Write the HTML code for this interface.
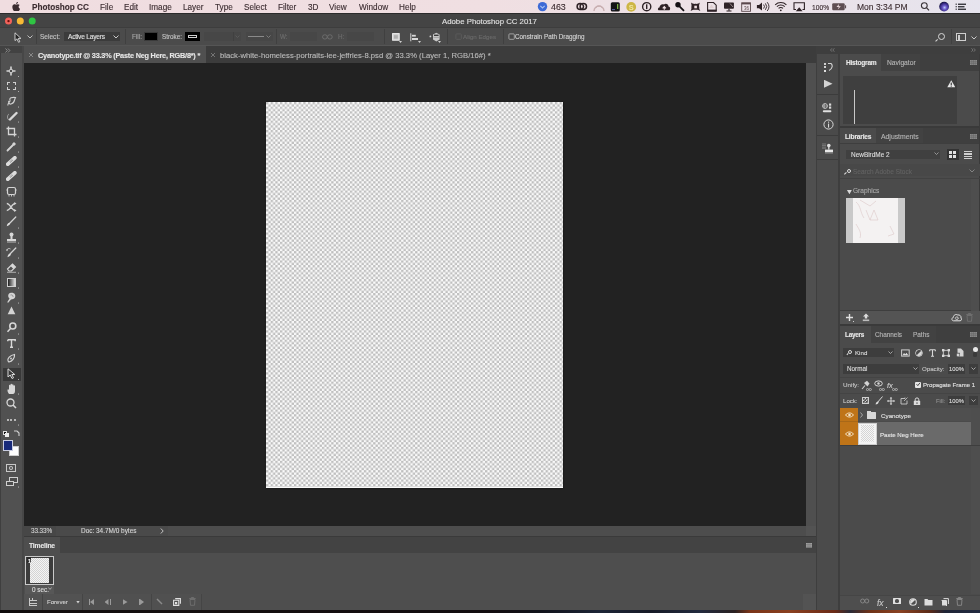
<!DOCTYPE html>
<html><head><meta charset="utf-8">
<style>
*{margin:0;padding:0;box-sizing:border-box}
html,body{width:980px;height:613px;overflow:hidden;background:#4b4b4b;font-family:"Liberation Sans",sans-serif;position:relative}
.a{position:absolute}
.t{position:absolute;white-space:nowrap;line-height:1;-webkit-text-stroke:0.12px currentColor;will-change:transform}
.doc{left:265.5px;top:102px;width:297.5px;height:385.5px;overflow:hidden;background:#fafafa;box-shadow:0 0 1.5px 0.5px #111}
</style></head><body>
<div class="a" style="left:0px;top:0px;width:980px;height:13px;background:linear-gradient(90deg,#f0dde0 0%,#f0dfe2 50%,#ebe2e8 80%,#e6e4ee 100%);"></div>
<svg class="a" style="left:12px;top:1.5px" width="8" height="9" viewBox="0 0 16 18"><path fill="#3b2c30" d="M13.3 9.6c0-2.3 1.9-3.4 2-3.5-1.1-1.6-2.8-1.8-3.4-1.8-1.4-.1-2.8.9-3.5.9-.7 0-1.8-.8-3-.8C3.8 4.4 2.3 5.3 1.5 6.7c-1.7 2.9-.4 7.2 1.2 9.6.8 1.2 1.8 2.5 3 2.4 1.2 0 1.7-.8 3.1-.8 1.5 0 1.9.8 3.1.8 1.3 0 2.1-1.2 2.9-2.3.9-1.300 1.300-2.600 1.300-2.700-.1 0-2.700-1-2.800-4.100zM11 2.700c.6-.8 1.100-1.900 1-3-.9 0-2.100.6-2.700 1.400-.6.700-1.100 1.800-1 2.900 1 .1 2.100-.5 2.700-1.300z"/></svg>
<div class="t" style="left:31.8px;top:4.00px;font-size:8.2px;color:#3b2c30;font-weight:bold;">Photoshop CC</div>
<div class="t" style="left:100px;top:4.00px;font-size:8.2px;color:#3b2c30;font-weight:normal;">File</div>
<div class="t" style="left:123.8px;top:4.00px;font-size:8.2px;color:#3b2c30;font-weight:normal;">Edit</div>
<div class="t" style="left:148.8px;top:4.00px;font-size:8.2px;color:#3b2c30;font-weight:normal;">Image</div>
<div class="t" style="left:182.7px;top:4.00px;font-size:8.2px;color:#3b2c30;font-weight:normal;">Layer</div>
<div class="t" style="left:214.9px;top:4.00px;font-size:8.2px;color:#3b2c30;font-weight:normal;">Type</div>
<div class="t" style="left:243.5px;top:4.00px;font-size:8.2px;color:#3b2c30;font-weight:normal;">Select</div>
<div class="t" style="left:277.8px;top:4.00px;font-size:8.2px;color:#3b2c30;font-weight:normal;">Filter</div>
<div class="t" style="left:307.9px;top:4.00px;font-size:8.2px;color:#3b2c30;font-weight:normal;">3D</div>
<div class="t" style="left:329.2px;top:4.00px;font-size:8.2px;color:#3b2c30;font-weight:normal;">View</div>
<div class="t" style="left:358.6px;top:4.00px;font-size:8.2px;color:#3b2c30;font-weight:normal;">Window</div>
<div class="t" style="left:399.4px;top:4.00px;font-size:8.2px;color:#3b2c30;font-weight:normal;">Help</div>
<svg class="a" style="left:0;top:0" width="980" height="13" viewBox="0 0 980 13">
<circle cx="542.5" cy="6.6" r="4.7" fill="#3d6ad6"/>
<path d="M540.3 5.8 L542.5 8 L544.7 5.8" fill="none" stroke="#a8c0f0" stroke-width="1.1"/>
<path d="M580.3 6.6 m-3.2 0 a3.2 3 0 1 0 6.4 0 a3.2 3 0 1 0 -6.4 0 M583.3 6.6 m-3.2 0 a3.2 3 0 1 0 6.4 0 a3.2 3 0 1 0 -6.4 0" fill="none" stroke="#2e2226" stroke-width="1.5"/>
<path d="M594 11 A5 5 0 0 1 604 11" fill="none" stroke="#c8aeb0" stroke-width="1.3"/>
<path d="M596 8 L598 5.5 L599 7 L600 5.5 L602 8" fill="none" stroke="#c8aeb0" stroke-width="0.8"/>
<rect x="610.8" y="2.2" width="9" height="9.2" rx="1.5" fill="#141414"/>
<rect x="617" y="4" width="1.3" height="5" fill="#7ab040"/>
<rect x="612" y="9.3" width="3" height="0.8" fill="#6a7ad0"/>
<circle cx="631.2" cy="6.9" r="4.9" fill="#cdb645"/>
<text x="631.2" y="9.6" font-size="7.5" font-family="Liberation Sans" font-weight="bold" fill="#f0e6a0" text-anchor="middle">S</text>
<circle cx="646.7" cy="6.7" r="4.1" fill="none" stroke="#2e2226" stroke-width="1.4"/>
<rect x="646" y="4.3" width="1.4" height="4.8" fill="#2e2226"/>
<path d="M659 10.3 C657.5 10.3 657.5 7.5 659.5 7.5 C659.5 5 662 3.5 664 4.5 C665.5 3 668.5 4 668.5 6.5 C670.5 6.5 670.8 10.3 668.8 10.3 Z" fill="#2e2226"/>
<path d="M664.3 9.8 L664.3 7.2 M662.7 8.3 L664.3 6.6 L665.9 8.3" fill="none" stroke="#efdfe2" stroke-width="1.1"/>
<circle cx="678" cy="4.8" r="2.7" fill="#141014"/>
<path d="M679.5 6.3 L684 10.8" stroke="#141014" stroke-width="1.7"/>
<path d="M691 2.5 C693 4 694 4 695.5 3.8 C697 4 698 4 700 2.5 C699 4.5 698.8 6 699.3 7 C699 8.5 699.5 9.5 700.4 11 C698.5 9.8 697 9.5 695.5 9.8 C694 9.5 692.5 9.8 690.6 11 C691.5 9 691.6 8 691.3 7 C691.8 6 691.5 4.5 691 2.5 Z" fill="#2e2226"/>
<rect x="694.3" y="5.7" width="2.6" height="2.6" fill="#efdfe2"/>
<path d="M707.6 11 L707.6 2.5 L713.5 2.5 L716.2 5.2 L716.2 11 Z" fill="none" stroke="#2e2226" stroke-width="1.1"/>
<rect x="707.2" y="9.6" width="9.4" height="2" fill="#2e2226"/>
<path d="M709 8 L711.5 4.5 L714 8 Z" fill="#e0d0d2"/>
<rect x="724" y="2.5" width="9.9" height="6.2" rx="0.8" fill="#2e2226"/>
<path d="M730 3.5 L733 7" stroke="#c8b8ba" stroke-width="0.7"/>
<rect x="728.4" y="8.7" width="1.2" height="2" fill="#2e2226"/><rect x="726.5" y="10.5" width="5" height="1" fill="#2e2226"/>
<rect x="741.7" y="2.8" width="8.8" height="8.5" fill="none" stroke="#5a484c" stroke-width="0.9"/>
<rect x="741.7" y="2.8" width="8.8" height="1.6" fill="#5a484c"/>
<text x="746.5" y="9.8" font-size="4.5" font-family="Liberation Sans" fill="#5a484c" text-anchor="middle">36</text>
<path d="M756.9 5 L759 5 L762 2.6 L762 10.6 L759 8.2 L756.9 8.2 Z" fill="#2e2226"/>
<path d="M763.6 4.6 A3 3 0 0 1 763.6 8.6 M765.4 3.4 A5 5 0 0 1 765.4 9.8 M767.2 2.2 A7 7 0 0 1 767.2 11" fill="none" stroke="#2e2226" stroke-width="0.9"/>
<path d="M775.2 4.8 A8 8 0 0 1 786.4 4.8 M776.9 6.6 A5.5 5.5 0 0 1 784.7 6.6 M778.6 8.4 A3 3 0 0 1 783 8.4" fill="none" stroke="#2e2226" stroke-width="1.1"/>
<circle cx="780.8" cy="10.3" r="0.9" fill="#2e2226"/>
<path d="M796 9.5 L794 9.5 L794 2.8 L804.4 2.8 L804.4 9.5 L802.5 9.5" fill="none" stroke="#2e2226" stroke-width="1.1"/>
<path d="M799.2 7.2 L802.6 11.3 L795.8 11.3 Z" fill="#2e2226"/>
<rect x="832.2" y="3.3" width="12.5" height="7" rx="1.2" fill="#5e4e52"/>
<rect x="845" y="5.3" width="1.1" height="3" fill="#5e4e52"/>
<path d="M839 4 L836.5 7 L838.8 7 L837.8 9.6 L840.8 6.3 L838.6 6.3 Z" fill="#efdfe2"/>
<circle cx="924.3" cy="5.6" r="2.9" fill="none" stroke="#3a3438" stroke-width="1.1"/>
<path d="M926.4 7.7 L929 10.3" stroke="#3a3438" stroke-width="1.2"/>
<defs><radialGradient id="siri" cx="55%" cy="60%" r="60%"><stop offset="0" stop-color="#b8c8f8"/><stop offset="0.35" stop-color="#6a58c8"/><stop offset="0.8" stop-color="#2a2070"/><stop offset="1" stop-color="#141438"/></radialGradient></defs>
<circle cx="944.1" cy="6.6" r="4.9" fill="url(#siri)"/>
<rect x="955.6" y="3.6" width="1.2" height="1.2" fill="#2a2a30"/><rect x="958" y="3.6" width="8" height="1.3" fill="#2a2a30"/>
<rect x="955.6" y="6.1" width="1.2" height="1.2" fill="#2a2a30"/><rect x="958" y="6.1" width="6.5" height="1.3" fill="#2a2a30"/>
<rect x="955.6" y="8.6" width="1.2" height="1.2" fill="#2a2a30"/><rect x="958" y="8.6" width="8" height="1.3" fill="#2a2a30"/>
</svg>
<div class="t" style="left:550.9px;top:3.00px;font-size:8.9px;color:#3b2c30;font-weight:normal;">463</div>
<div class="t" style="left:811.9px;top:5.00px;font-size:6.7px;color:#3b2c30;font-weight:normal;">100%</div>
<div class="t" style="left:857.2px;top:3.00px;font-size:8.5px;color:#3b2c30;font-weight:normal;">Mon 3:34 PM</div>
<div class="a" style="left:0px;top:13px;width:980px;height:1px;background:#2b2b2b;"></div>
<div class="a" style="left:0px;top:14px;width:980px;height:13px;background:#444444;"></div>
<svg class="a" style="left:0;top:13px" width="40" height="14"><circle cx="8.5" cy="8.1" r="3.5" fill="#f2625a"/><circle cx="8.5" cy="8.1" r="1.2" fill="#6a0e0a"/><circle cx="20.3" cy="8.1" r="3.5" fill="#f7b935"/><circle cx="32.2" cy="8.1" r="3.5" fill="#2fc443"/></svg>
<div class="t" style="left:442.2px;top:18.00px;font-size:7.8px;color:#e0e0e0;font-weight:normal;">Adobe Photoshop CC 2017</div>
<div class="a" style="left:0px;top:27px;width:980px;height:19px;background:#4b4b4b;"></div>
<div class="a" style="left:0px;top:27px;width:980px;height:1px;background:#3d3d3d;"></div>
<div class="a" style="left:0px;top:45px;width:980px;height:1px;background:#555555;"></div>
<svg class="a" style="left:14px;top:31.5px" width="8" height="11" viewBox="0 0 8 11"><path d="M1 0.8 L1 8.6 L2.9 6.9 L4.6 10.3 L5.8 9.7 L4.2 6.4 L6.9 6.4 Z" fill="#222" stroke="#dcdcdc" stroke-width="0.9"/></svg>
<svg class="a" style="left:26.5px;top:34.5px" width="6" height="4" viewBox="0 0 6 4"><path d="M0.5 0.5 L3 3 L5.5 0.5" fill="none" stroke="#bdbdbd" stroke-width="1"/></svg>
<div class="a" style="left:36px;top:29px;width:1px;height:15px;background:#404040;"></div>
<div class="t" style="left:40.3px;top:34.00px;font-size:6.55px;color:#c4c4c4;font-weight:normal;">Select:</div>
<div class="a" style="left:63.7px;top:31.5px;width:56.5px;height:9.3px;background:#3b3b3b;"></div>
<div class="t" style="left:67.8px;top:34.00px;font-size:6.6px;color:#e0e0e0;font-weight:normal;letter-spacing:-0.22px">Active Layers</div>
<svg class="a" style="left:113px;top:34.5px" width="6" height="4" viewBox="0 0 6 4"><path d="M0.5 0.5 L3 3 L5.5 0.5" fill="none" stroke="#c8c8c8" stroke-width="1"/></svg>
<div class="a" style="left:125px;top:29px;width:1px;height:15px;background:#404040;"></div>
<div class="t" style="left:132px;top:34.00px;font-size:6.4px;color:#a8a8a8;font-weight:normal;">Fill:</div>
<div class="a" style="left:143.7px;top:31.9px;width:14.7px;height:8.9px;background:#000;border:0.8px solid #3a3a3a"></div>
<div class="t" style="left:161.8px;top:34.00px;font-size:6.3px;color:#c4c4c4;font-weight:normal;">Stroke:</div>
<div class="a" style="left:184.5px;top:31.9px;width:15px;height:8.9px;background:#000;"></div>
<div class="a" style="left:187.5px;top:34.6px;width:9px;height:3.5px;background:transparent;border:1px solid #cfcfcf"></div>
<div class="a" style="left:204px;top:31.9px;width:37px;height:8.9px;background:#474747;"></div>
<div class="a" style="left:233px;top:31.9px;width:1px;height:8.9px;background:#404040;"></div>
<svg class="a" style="left:235px;top:35px" width="5" height="3" viewBox="0 0 5 3"><path d="M0.5 0.5 L2.5 2.5 L4.5 0.5" fill="none" stroke="#5e5e5e" stroke-width="0.8"/></svg>
<div class="a" style="left:245.7px;top:31.9px;width:27px;height:8.9px;background:#474747;"></div>
<div class="a" style="left:248px;top:36px;width:16px;height:0.8px;background:#8a8a8a;"></div>
<svg class="a" style="left:266px;top:35px" width="5" height="3" viewBox="0 0 5 3"><path d="M0.5 0.5 L2.5 2.5 L4.5 0.5" fill="none" stroke="#8a8a8a" stroke-width="0.8"/></svg>
<div class="a" style="left:276px;top:29px;width:1px;height:15px;background:#404040;"></div>
<div class="t" style="left:280px;top:34.00px;font-size:6.3px;color:#6d6d6d;font-weight:normal;">W:</div>
<div class="a" style="left:289.6px;top:31.9px;width:27.5px;height:8.9px;background:#474747;"></div>
<svg class="a" style="left:321.5px;top:33.5px" width="11" height="6" viewBox="0 0 11 6"><rect x="0.6" y="0.8" width="4.6" height="4.2" rx="2" fill="none" stroke="#707070" stroke-width="0.9"/><rect x="5.6" y="0.8" width="4.6" height="4.2" rx="2" fill="none" stroke="#707070" stroke-width="0.9"/></svg>
<div class="t" style="left:338px;top:34.00px;font-size:6.3px;color:#6d6d6d;font-weight:normal;">H:</div>
<div class="a" style="left:346.8px;top:31.9px;width:27.4px;height:8.9px;background:#474747;"></div>
<div class="a" style="left:384px;top:29px;width:1px;height:15px;background:#404040;"></div>
<svg class="a" style="left:391.5px;top:32.5px" width="8" height="8" viewBox="0 0 8 8"><rect x="0.6" y="0.6" width="6.6" height="6.6" fill="#d0d0d0" stroke="#f0f0f0" stroke-width="1"/><rect x="2" y="2.2" width="3.8" height="3.4" fill="#b0b0b0"/></svg>
<svg class="a" style="left:399px;top:41px" width="3" height="2" viewBox="0 0 3 2"><path d="M0 0 L3 0 L1.5 2 Z" fill="#cfcfcf"/></svg>
<svg class="a" style="left:410px;top:32.5px" width="9" height="9" viewBox="0 0 9 9"><rect x="0.3" y="0.3" width="1" height="8" fill="#d8d8d8"/><rect x="2" y="1.8" width="3.8" height="1.8" fill="#d8d8d8"/><rect x="2" y="5" width="6" height="2" fill="#d8d8d8"/></svg>
<svg class="a" style="left:418px;top:41px" width="3" height="2" viewBox="0 0 3 2"><path d="M0 0 L3 0 L1.5 2 Z" fill="#cfcfcf"/></svg>
<svg class="a" style="left:428.5px;top:31.5px" width="12" height="10" viewBox="0 0 12 10"><circle cx="1.4" cy="4.4" r="0.9" fill="#d0d0d0"/><path d="M7.3 0.8 L10.6 2.4 L10.6 7.6 L7.3 9.4 L4 7.6 L4 2.4 Z" fill="#c8c8c8"/><path d="M5 2.6 L9.6 2.6 L9.6 4 L5 4 Z" fill="#3a3a3a"/><path d="M4.5 5.4 L10 5.4" stroke="#8a8a8a" stroke-width="0.6"/></svg>
<svg class="a" style="left:437.5px;top:41px" width="3" height="2" viewBox="0 0 3 2"><path d="M0 0 L3 0 L1.5 2 Z" fill="#cfcfcf"/></svg>
<div class="a" style="left:447px;top:29px;width:1px;height:15px;background:#404040;"></div>
<svg class="a" style="left:454.5px;top:33px" width="7" height="7" viewBox="0 0 7 7"><rect x="0.9" y="0.9" width="5.4" height="5.4" rx="0.8" fill="none" stroke="#5e5e5e" stroke-width="0.8"/></svg>
<div class="t" style="left:463px;top:34.00px;font-size:6.2px;color:#6a6a6a;font-weight:normal;">Align Edges</div>
<div class="a" style="left:503px;top:29px;width:1px;height:15px;background:#404040;"></div>
<svg class="a" style="left:508px;top:33px" width="7" height="7" viewBox="0 0 7 7"><rect x="0.9" y="0.9" width="5.4" height="5.4" rx="0.8" fill="#474747" stroke="#b8b8b8" stroke-width="0.8"/></svg>
<div class="t" style="left:515.3px;top:34.00px;font-size:6.35px;color:#d4d4d4;font-weight:normal;">Constrain Path Dragging</div>
<div class="a" style="left:937.8px;top:32.8px;width:7px;height:7px;border:1.3px solid #d8d8d8;border-radius:50%"></div>
<div class="a" style="left:936px;top:39.3px;width:1.4px;height:3.2px;background:#d8d8d8;transform:rotate(45deg)"></div>
<div class="a" style="left:951px;top:29px;width:1px;height:15px;background:#404040;"></div>
<div class="a" style="left:956px;top:33.3px;width:10px;height:7.8px;background:transparent;border:1.2px solid #cfcfcf"></div>
<div class="a" style="left:958.3px;top:34.5px;width:1.3px;height:5.4px;background:#cfcfcf;"></div>
<svg class="a" style="left:970.5px;top:35.5px" width="6" height="4" viewBox="0 0 6 4"><path d="M0.5 0.5 L3 3 L5.5 0.5" fill="none" stroke="#c8c8c8" stroke-width="1"/></svg>
<div class="a" style="left:0px;top:46px;width:24px;height:564px;background:#515151;"></div>
<div class="a" style="left:0px;top:46px;width:1px;height:564px;background:#3f3f3f;"></div>
<div class="a" style="left:22px;top:46px;width:2px;height:564px;background:#474747;"></div>
<div class="a" style="left:0px;top:46px;width:22px;height:7px;background:#424242;"></div>
<svg class="a" style="left:5px;top:47.5px" width="6" height="5" viewBox="0 0 6 5"><path d="M0.5 0.5 L2.3 2.5 L0.5 4.5 M3 0.5 L4.8 2.5 L3 4.5" fill="none" stroke="#a0a0a0" stroke-width="0.8"/></svg>
<div class="a" style="left:3px;top:367.5px;width:17.5px;height:13px;background:#383838;"></div>
<svg class="a" style="left:6px;top:66px" width="10" height="10" viewBox="0 0 10 10"><path d="M5 0.5 L5 9.5 M0.5 5 L9.5 5" stroke="#d4d4d4" stroke-width="1.6"/><circle cx="5" cy="5" r="1.8" fill="#4c4c4c" stroke="#d4d4d4" stroke-width="1"/></svg>
<div class="a" style="left:17.5px;top:75.5px;width:1.6px;height:1.6px;background:#bdbdbd;clip-path:polygon(100% 0,100% 100%,0 100%)"></div>
<div class="a" style="left:6.5px;top:81.5px;width:9px;height:8.5px;background:transparent;border:1px dashed #d0d0d0"></div>
<div class="a" style="left:17.5px;top:90.5px;width:1.6px;height:1.6px;background:#bdbdbd;clip-path:polygon(100% 0,100% 100%,0 100%)"></div>
<svg class="a" style="left:6px;top:96px" width="11" height="11" viewBox="0 0 11 11"><path d="M2 9.5 C1 7 5 6 4 4 C3 2 6 1 9.5 1.5 C8 4 9 7 5 8 C3 8.5 2 6 3 5" fill="none" stroke="#d0d0d0" stroke-width="1.1"/></svg>
<div class="a" style="left:17.5px;top:106px;width:1.6px;height:1.6px;background:#bdbdbd;clip-path:polygon(100% 0,100% 100%,0 100%)"></div>
<svg class="a" style="left:5.5px;top:111px" width="12" height="11" viewBox="0 0 12 11"><path d="M3 9 C1 8 1 4 3 3" fill="none" stroke="#a0a0a0" stroke-width="1"/><path d="M4 8.5 L10.5 2" stroke="#d8d8d8" stroke-width="2.4" stroke-linecap="round"/></svg>
<div class="a" style="left:17.5px;top:121px;width:1.6px;height:1.6px;background:#bdbdbd;clip-path:polygon(100% 0,100% 100%,0 100%)"></div>
<svg class="a" style="left:6px;top:126px" width="11" height="11" viewBox="0 0 11 11"><path d="M2.5 0.5 L2.5 8.5 L10.5 8.5 M0.5 2.5 L8.5 2.5 L8.5 10.5" fill="none" stroke="#d4d4d4" stroke-width="1.3"/></svg>
<div class="a" style="left:17.5px;top:136px;width:1.6px;height:1.6px;background:#bdbdbd;clip-path:polygon(100% 0,100% 100%,0 100%)"></div>
<svg class="a" style="left:6px;top:141px" width="11" height="11" viewBox="0 0 11 11"><path d="M1.5 9.5 L7 4" stroke="#d4d4d4" stroke-width="1.8" stroke-linecap="round"/><path d="M6 3 L8 1 L10 3 L8 5 Z" fill="#d4d4d4"/></svg>
<div class="a" style="left:17.5px;top:151px;width:1.6px;height:1.6px;background:#bdbdbd;clip-path:polygon(100% 0,100% 100%,0 100%)"></div>
<svg class="a" style="left:6px;top:156px" width="11" height="10" viewBox="0 0 11 10"><path d="M1.8 8.2 L8.8 1.8" stroke="#dcdcdc" stroke-width="3.8" stroke-linecap="round"/><path d="M4 6.3 L6.6 3.7" stroke="#8a8a8a" stroke-width="1.6" stroke-dasharray="0.8 0.5"/></svg>
<div class="a" style="left:17.5px;top:166px;width:1.6px;height:1.6px;background:#bdbdbd;clip-path:polygon(100% 0,100% 100%,0 100%)"></div>
<svg class="a" style="left:6px;top:171px" width="11" height="10" viewBox="0 0 11 10"><path d="M1.8 8.2 L8.8 1.8" stroke="#dcdcdc" stroke-width="3.8" stroke-linecap="round"/><path d="M4 6.3 L6.6 3.7" stroke="#8a8a8a" stroke-width="1.6" stroke-dasharray="0.8 0.5"/></svg>
<svg class="a" style="left:5.5px;top:186px" width="11" height="11" viewBox="0 0 11 11"><rect x="1.5" y="1.5" width="8" height="7" rx="1.5" fill="none" stroke="#d4d4d4" stroke-width="1.2"/><path d="M3 9 L3 10.5 M5.5 9 L5.5 10.5 M8 9 L8 10.5 M1.5 4 L0.3 4 M9.5 4 L10.7 4" stroke="#d4d4d4" stroke-width="0.9"/></svg>
<svg class="a" style="left:6px;top:202px" width="11" height="10" viewBox="0 0 11 10"><path d="M0.8 1.5 C4 1.5 6 8.5 9 8.5 M0.8 8.5 C4 8.5 6 1.5 9 1.5" fill="none" stroke="#d4d4d4" stroke-width="1.3"/><path d="M8.3 0 L10.5 1.5 L8.3 3 Z M8.3 7 L10.5 8.5 L8.3 10 Z" fill="#d4d4d4"/></svg>
<svg class="a" style="left:6px;top:216px" width="11" height="11" viewBox="0 0 11 11"><path d="M2.5 8.5 L9.8 1" stroke="#d4d4d4" stroke-width="1.2" stroke-linecap="round"/><path d="M0.8 10.2 C1 8 2 6.8 3.8 6.8 C4.3 7.5 4 9 0.8 10.2 Z" fill="#e0e0e0"/></svg>
<div class="a" style="left:17.5px;top:227px;width:1.6px;height:1.6px;background:#bdbdbd;clip-path:polygon(100% 0,100% 100%,0 100%)"></div>
<svg class="a" style="left:6px;top:232px" width="11" height="11" viewBox="0 0 11 11"><circle cx="5.5" cy="2.5" r="2" fill="#d8d8d8"/><rect x="4.5" y="4" width="2" height="3" fill="#d8d8d8"/><rect x="1" y="7" width="9" height="2" fill="#d8d8d8"/><rect x="1" y="9.5" width="9" height="1" fill="#bbb"/></svg>
<div class="a" style="left:17.5px;top:242px;width:1.6px;height:1.6px;background:#bdbdbd;clip-path:polygon(100% 0,100% 100%,0 100%)"></div>
<svg class="a" style="left:6px;top:247px" width="11" height="11" viewBox="0 0 11 11"><path d="M3.5 7.5 L9.8 1" stroke="#d4d4d4" stroke-width="1.2" stroke-linecap="round"/><path d="M1.5 10.2 C1.7 8 2.7 6.8 4.5 6.8 C5 7.5 4.7 9 1.5 10.2 Z" fill="#e0e0e0"/><path d="M0.8 3.5 C1.2 1.5 3 1 4.5 2" fill="none" stroke="#d4d4d4" stroke-width="0.9"/><path d="M0 2.5 L1 4.2 L2 2.8 Z" fill="#d4d4d4"/></svg>
<div class="a" style="left:17.5px;top:257px;width:1.6px;height:1.6px;background:#bdbdbd;clip-path:polygon(100% 0,100% 100%,0 100%)"></div>
<svg class="a" style="left:6px;top:261.5px" width="11" height="11" viewBox="0 0 11 11"><path d="M1.5 7 L6.5 2 L9.5 5 L5.5 9 L3 9 Z" fill="none" stroke="#d8d8d8" stroke-width="1.1"/><path d="M4.5 4 L7.5 7 L9.5 5 L6.5 2 Z" fill="#d8d8d8"/><rect x="1" y="9.8" width="9" height="0.9" fill="#bbb"/></svg>
<div class="a" style="left:17.5px;top:272px;width:1.6px;height:1.6px;background:#bdbdbd;clip-path:polygon(100% 0,100% 100%,0 100%)"></div>
<div class="a" style="left:6.5px;top:278px;width:9px;height:8.5px;background:linear-gradient(90deg,#1f1f1f,#e0e0e0);border:1px solid #d0d0d0"></div>
<div class="a" style="left:17.5px;top:287px;width:1.6px;height:1.6px;background:#bdbdbd;clip-path:polygon(100% 0,100% 100%,0 100%)"></div>
<svg class="a" style="left:6px;top:292px" width="11" height="12" viewBox="0 0 11 12"><path d="M5 0.8 C8.5 0.5 10 3 9 5.5 C8 7.5 6.5 7 5 7.5 L2.2 10.8 L1.2 10.2 L3.5 6.5 C1.5 5 1.8 1 5 0.8 Z" fill="#d4d4d4"/><path d="M4.5 3 C6 2.5 7.5 3.5 7 5" fill="none" stroke="#777" stroke-width="0.7"/></svg>
<div class="a" style="left:17.5px;top:302px;width:1.6px;height:1.6px;background:#bdbdbd;clip-path:polygon(100% 0,100% 100%,0 100%)"></div>
<svg class="a" style="left:6.5px;top:305.5px" width="9" height="9" viewBox="0 0 9 9"><path d="M4.5 0.5 L8.3 8.3 L0.7 8.3 Z" fill="#d4d4d4"/></svg>
<svg class="a" style="left:6px;top:322px" width="11" height="11" viewBox="0 0 11 11"><circle cx="6.8" cy="4" r="3" fill="none" stroke="#d8d8d8" stroke-width="1.6"/><path d="M5 6 L1.5 9.8" stroke="#d8d8d8" stroke-width="1.5"/></svg>
<div class="a" style="left:17.5px;top:333px;width:1.6px;height:1.6px;background:#bdbdbd;clip-path:polygon(100% 0,100% 100%,0 100%)"></div>
<svg class="a" style="left:6.5px;top:338.5px" width="9" height="9" viewBox="0 0 9 9"><path d="M0.8 0.8 L8.2 0.8 L8.2 2.3 M0.8 0.8 L0.8 2.3 M4.5 0.8 L4.5 8.2 M3 8.2 L6 8.2" fill="none" stroke="#d8d8d8" stroke-width="1.4"/></svg>
<div class="a" style="left:17.5px;top:348px;width:1.6px;height:1.6px;background:#bdbdbd;clip-path:polygon(100% 0,100% 100%,0 100%)"></div>
<svg class="a" style="left:6px;top:353px" width="11" height="11" viewBox="0 0 11 11"><path d="M2 8 C1 6 4 2 8.5 1.5 C9 5 6 8.5 3 9 Z" fill="none" stroke="#d4d4d4" stroke-width="1.2"/><circle cx="5" cy="5.5" r="0.9" fill="#d4d4d4"/></svg>
<div class="a" style="left:17.5px;top:363px;width:1.6px;height:1.6px;background:#bdbdbd;clip-path:polygon(100% 0,100% 100%,0 100%)"></div>
<svg class="a" style="left:7px;top:368px" width="9" height="11" viewBox="0 0 9 11"><path d="M1 0.8 L1 9 L3.2 7 L5 10.5 L6.5 9.8 L4.8 6.5 L7.8 6.5 Z" fill="#383838" stroke="#d8d8d8" stroke-width="1"/></svg>
<div class="a" style="left:17.5px;top:378.5px;width:1.6px;height:1.6px;background:#bdbdbd;clip-path:polygon(100% 0,100% 100%,0 100%)"></div>
<svg class="a" style="left:5.5px;top:383px" width="12" height="12" viewBox="0 0 12 12"><path d="M3 11 C1.5 9 1 7 2 6 L3 7 L3 2.5 C3 1.5 4.3 1.5 4.3 2.5 L4.5 1.5 C4.5 0.5 6 0.5 6 1.5 L6 2 C6 1 7.5 1 7.5 2 L7.5 3 C7.5 2 9 2 9 3 L9 8 C9 10 8 11 7 11 Z" fill="#d8d8d8"/></svg>
<div class="a" style="left:17.5px;top:393px;width:1.6px;height:1.6px;background:#bdbdbd;clip-path:polygon(100% 0,100% 100%,0 100%)"></div>
<svg class="a" style="left:6px;top:398px" width="11" height="11" viewBox="0 0 11 11"><circle cx="4.5" cy="4.5" r="3.5" fill="none" stroke="#d8d8d8" stroke-width="1.3"/><path d="M7 7 L10 10" stroke="#d8d8d8" stroke-width="1.6"/></svg>
<div class="a" style="left:6.5px;top:419px;width:2px;height:2px;background:#d8d8d8;border-radius:50%"></div>
<div class="a" style="left:10.3px;top:419px;width:2px;height:2px;background:#d8d8d8;border-radius:50%"></div>
<div class="a" style="left:14.1px;top:419px;width:2px;height:2px;background:#d8d8d8;border-radius:50%"></div>
<div class="a" style="left:17.5px;top:424px;width:1.6px;height:1.6px;background:#bdbdbd;clip-path:polygon(100% 0,100% 100%,0 100%)"></div>
<div class="a" style="left:3px;top:430.5px;width:4px;height:4px;background:#111;border:0.6px solid #ddd"></div>
<div class="a" style="left:5px;top:432.5px;width:4px;height:4px;background:#eee;"></div>
<svg class="a" style="left:12.5px;top:429.5px" width="7" height="7" viewBox="0 0 7 7"><path d="M1 1 L4 1 M4 1 L6 3 L6 6" fill="none" stroke="#cfcfcf" stroke-width="1.1"/></svg>
<div class="a" style="left:9px;top:446px;width:10px;height:10px;background:#fdfdfd;border:0.5px solid #ccc"></div>
<div class="a" style="left:3.3px;top:440px;width:10.2px;height:10.6px;background:#182a7a;border:1px solid #c8cce0"></div>
<div class="a" style="left:6px;top:463.5px;width:10px;height:8px;background:transparent;border:1.2px solid #c8c8c8"></div>
<div class="a" style="left:8.8px;top:465.6px;width:4.4px;height:4px;border:1px solid #c8c8c8;border-radius:50%"></div>
<div class="a" style="left:9px;top:477px;width:9px;height:6px;background:#4c4c4c;border:1.1px solid #cfcfcf"></div>
<div class="a" style="left:6px;top:480.5px;width:8px;height:5px;background:#4c4c4c;border:1.1px solid #cfcfcf"></div>
<div class="a" style="left:17.5px;top:486px;width:1.6px;height:1.6px;background:#bdbdbd;clip-path:polygon(100% 0,100% 100%,0 100%)"></div>
<div class="a" style="left:24px;top:46px;width:792px;height:17px;background:#3c3c3c;"></div>
<div class="a" style="left:24px;top:46px;width:182px;height:17px;background:#505050;"></div>
<svg class="a" style="left:27.5px;top:51.5px" width="6" height="6" viewBox="0 0 6 6"><path d="M1 1 L5 5 M5 1 L1 5" stroke="#8e8e8e" stroke-width="0.9"/></svg>
<div class="t" style="left:37.8px;top:52.00px;font-size:7.3px;color:#e6e6e6;font-weight:bold;letter-spacing:-0.22px">Cyanotype.tif @ 33.3% (Paste Neg Here, RGB/8*) *</div>
<svg class="a" style="left:209.5px;top:51.5px" width="6" height="6" viewBox="0 0 6 6"><path d="M1 1 L5 5 M5 1 L1 5" stroke="#7a7a7a" stroke-width="0.9"/></svg>
<div class="t" style="left:220px;top:52.00px;font-size:7.68px;color:#bababa;font-weight:normal;">black-white-homeless-portraits-lee-jeffries-8.psd @ 33.3% (Layer 1, RGB/16#) *</div>
<div class="a" style="left:24px;top:63px;width:782px;height:463px;background:#222222;"></div>
<div class="a doc"><svg width="298" height="385" style="display:block"><defs><pattern id="chk" width="4.66" height="4.66" patternUnits="userSpaceOnUse"><rect width="2.33" height="2.33" fill="#bfbfbf"/><rect x="2.33" y="2.33" width="2.33" height="2.33" fill="#bfbfbf"/></pattern></defs><rect width="298" height="385" fill="url(#chk)"/></svg></div>
<div class="a" style="left:806px;top:63px;width:10px;height:463px;background:#4f4f4f;"></div>
<div class="a" style="left:24px;top:526px;width:792px;height:9.5px;background:#4d4d4d;"></div>
<div class="a" style="left:24px;top:526px;width:32px;height:9.5px;background:#474747;"></div>
<div class="a" style="left:56px;top:526px;width:112px;height:9.5px;background:#4a4a4a;"></div>
<div class="t" style="left:31.1px;top:528.00px;font-size:6.4px;color:#d0d0d0;font-weight:normal;letter-spacing:-0.1px">33.33%</div>
<div class="t" style="left:80.7px;top:528.00px;font-size:6.45px;color:#d4d4d4;font-weight:normal;">Doc: 34.7M/0 bytes</div>
<svg class="a" style="left:159.5px;top:528px" width="4" height="6" viewBox="0 0 4 6"><path d="M0.8 0.5 L3.2 3 L0.8 5.5" fill="none" stroke="#cfcfcf" stroke-width="0.9"/></svg>
<div class="a" style="left:24px;top:535.5px;width:792px;height:1px;background:#3a3a3a;"></div>
<div class="a" style="left:24px;top:536.5px;width:792px;height:16.5px;background:#434343;"></div>
<div class="a" style="left:24px;top:552.5px;width:792px;height:0.8px;background:#3a3a3a;"></div>
<div class="a" style="left:24px;top:536.5px;width:36px;height:16.5px;background:#4e4e4e;"></div>
<div class="t" style="left:29px;top:543.00px;font-size:6.8px;color:#e6e6e6;font-weight:bold;letter-spacing:-0.19px">Timeline</div>
<svg class="a" style="left:805.5px;top:542.8px" width="6" height="5"><rect width="6" height="4.6" fill="#a0a0a0"/><path d="M0 1.5 L6 1.5 M0 3.1 L6 3.1 M2 0 L2 5 M4 0 L4 5" stroke="#6a6a6a" stroke-width="0.4"/></svg>
<div class="a" style="left:24px;top:553px;width:792px;height:41px;background:#4e4e4e;"></div>
<div class="a" style="left:25.1px;top:556px;width:29px;height:29px;background:#3c3c3c;border:1px solid #c9c9c9"></div>
<svg class="a" style="left:29.8px;top:557.7px" width="19.5" height="25.7"><rect width="19.5" height="25.7" fill="#f4f4f4"/><rect width="19.5" height="25.7" fill="url(#chk2)"/></svg>
<div class="a" style="left:27px;top:557px;width:4px;height:6px;background:#2a2a2a;"></div>
<div class="t" style="left:27.6px;top:559.00px;font-size:5.5px;color:#f0f0f0;font-weight:bold;">1</div>
<div class="a" style="left:25px;top:585px;width:29px;height:9px;background:#575757;"></div>
<div class="t" style="left:31.8px;top:587.00px;font-size:6.4px;color:#dcdcdc;font-weight:normal;">0 sec.</div>
<svg class="a" style="left:48px;top:587px" width="4" height="3" viewBox="0 0 4 3"><path d="M0.4 0.5 L2 2.4 L3.6 0.5" fill="none" stroke="#cfcfcf" stroke-width="0.7"/></svg>
<div class="a" style="left:24px;top:594px;width:792px;height:16px;background:#4e4e4e;"></div>
<div class="a" style="left:24px;top:594px;width:18px;height:16px;background:#535353;"></div>
<div class="a" style="left:42px;top:594px;width:40px;height:16px;background:#525252;"></div>
<div class="a" style="left:82px;top:594px;width:69px;height:16px;background:#505050;"></div>
<div class="a" style="left:151px;top:594px;width:50px;height:16px;background:#505050;"></div>
<div class="a" style="left:41.6px;top:594px;width:1px;height:15.6px;background:#454545;"></div>
<div class="a" style="left:81.7px;top:594px;width:1px;height:15.6px;background:#454545;"></div>
<div class="a" style="left:151px;top:594px;width:1px;height:15.6px;background:#454545;"></div>
<div class="a" style="left:200.5px;top:594px;width:1px;height:15.6px;background:#454545;"></div>
<div class="a" style="left:28.5px;top:598px;width:1px;height:8px;background:#c8c8c8;"></div>
<div class="a" style="left:30px;top:600px;width:7px;height:1px;background:#c8c8c8;"></div>
<div class="a" style="left:30px;top:602.5px;width:7px;height:1px;background:#c8c8c8;"></div>
<div class="a" style="left:30px;top:605px;width:7px;height:1px;background:#c8c8c8;"></div>
<div class="a" style="left:32px;top:598px;width:1.2px;height:3px;background:#c8c8c8;"></div>
<div class="t" style="left:46.7px;top:599.00px;font-size:6.05px;color:#cfcfcf;font-weight:normal;">Forever</div>
<div class="a" style="left:76px;top:600.5px;width:4px;height:3px;background:#d0d0d0;clip-path:polygon(0 0,100% 0,50% 100%)"></div>
<div class="a" style="left:88.5px;top:599px;width:1px;height:6px;background:#9a9a9a;"></div>
<div class="a" style="left:90px;top:599px;width:4px;height:6px;background:#9a9a9a;clip-path:polygon(100% 0,100% 100%,0 50%)"></div>
<div class="a" style="left:104.5px;top:599px;width:4px;height:6px;background:#9a9a9a;clip-path:polygon(100% 0,100% 100%,0 50%)"></div>
<div class="a" style="left:109.5px;top:599px;width:1px;height:6px;background:#9a9a9a;"></div>
<div class="a" style="left:122.5px;top:599px;width:5px;height:6px;background:#9a9a9a;clip-path:polygon(0 0,100% 50%,0 100%)"></div>
<div class="a" style="left:138.5px;top:599px;width:1px;height:6px;background:#9a9a9a;"></div>
<div class="a" style="left:140px;top:599px;width:4px;height:6px;background:#9a9a9a;clip-path:polygon(0 0,100% 50%,0 100%)"></div>
<svg class="a" style="left:156px;top:598px" width="8" height="8" viewBox="0 0 8 8"><path d="M1 1 L6 6" stroke="#8a8a8a" stroke-width="1.4"/></svg>
<svg class="a" style="left:172.5px;top:597.5px" width="8" height="8" viewBox="0 0 8 8"><path d="M0.6 2.2 L5.8 2.2 L5.8 7.4 L0.6 7.4 Z" fill="none" stroke="#e0e0e0" stroke-width="1.1"/><path d="M2.2 0.6 L7.4 0.6 L7.4 5.8" fill="none" stroke="#e0e0e0" stroke-width="1.1"/><rect x="2" y="4" width="2.2" height="2.2" fill="#e0e0e0"/></svg>
<svg class="a" style="left:189px;top:597px" width="7" height="9" viewBox="0 0 7 9"><path d="M0.3 1.5 L6.7 1.5 M2.3 1.5 L2.3 0.5 L4.7 0.5 L4.7 1.5 M1 2.5 L1.5 8.3 L5.5 8.3 L6 2.5 Z" fill="none" stroke="#707070" stroke-width="0.9"/></svg>
<div class="a" style="left:803px;top:594px;width:12.5px;height:15.5px;background:#535353;"></div>
<div class="a" style="left:806px;top:526px;width:10px;height:9.5px;background:#535353;"></div>
<div class="a" style="left:816px;top:46px;width:164px;height:564px;background:#3e3e3e;"></div>
<svg class="a" style="left:830px;top:48px" width="5" height="4" viewBox="0 0 5 4"><path d="M2 0.3 L0.5 2 L2 3.7 M4.3 0.3 L2.8 2 L4.3 3.7" fill="none" stroke="#8a8a8a" stroke-width="0.7"/></svg>
<svg class="a" style="left:971px;top:48px" width="5" height="4" viewBox="0 0 5 4"><path d="M0.5 0.3 L2 2 L0.5 3.7 M2.8 0.3 L4.3 2 L2.8 3.7" fill="none" stroke="#8a8a8a" stroke-width="0.7"/></svg>
<div class="a" style="left:816.5px;top:54px;width:21.5px;height:556px;background:#4b4b4b;"></div>
<div class="a" style="left:816.5px;top:94px;width:21.5px;height:1px;background:#3e3e3e;"></div>
<div class="a" style="left:816.5px;top:134.5px;width:21.5px;height:1px;background:#3e3e3e;"></div>
<div class="a" style="left:816.5px;top:158.5px;width:21.5px;height:1px;background:#3e3e3e;"></div>
<div class="a" style="left:816.5px;top:54px;width:21.5px;height:104.5px;background:#4a4a4a;"></div>
<div class="a" style="left:816.5px;top:94px;width:21.5px;height:1px;background:#3c3c3c;"></div>
<div class="a" style="left:816.5px;top:134.5px;width:21.5px;height:1px;background:#3c3c3c;"></div>
<div class="a" style="left:816.5px;top:158.5px;width:21.5px;height:1px;background:#3c3c3c;"></div>
<div class="a" style="left:823.5px;top:63px;width:2.2px;height:2.2px;background:#d0d0d0;"></div>
<div class="a" style="left:823.5px;top:66.3px;width:2.2px;height:2.2px;background:#d0d0d0;"></div>
<div class="a" style="left:823.5px;top:69.6px;width:2.2px;height:2.2px;background:#e0e0e0;"></div>
<svg class="a" style="left:826.5px;top:62px" width="6" height="10" viewBox="0 0 6 10"><path d="M1 1.5 L4 1.5 C6 3 5.5 7 2 8.5" fill="none" stroke="#d4d4d4" stroke-width="1.1"/></svg>
<div class="a" style="left:823.5px;top:79.5px;width:9px;height:8.5px;background:#d4d4d4;clip-path:polygon(0 0,100% 50%,0 100%)"></div>
<svg class="a" style="left:822px;top:103px" width="12" height="10" viewBox="0 0 12 10"><circle cx="3" cy="3" r="2.4" fill="none" stroke="#d0d0d0" stroke-width="0.9"/><path d="M0.6 3 L5.4 3 M3 0.6 C1.8 2 1.8 4 3 5.4" fill="none" stroke="#d0d0d0" stroke-width="0.6"/><rect x="7" y="0.5" width="2.2" height="2.2" fill="#d8d8d8"/><rect x="7" y="3.5" width="2.2" height="2.2" fill="#d8d8d8"/><rect x="0.8" y="7.2" width="8.6" height="2" rx="1" fill="#e0e0e0"/></svg>
<svg class="a" style="left:822.5px;top:118.5px" width="11" height="11" viewBox="0 0 11 11"><circle cx="5.5" cy="5.5" r="4.6" fill="none" stroke="#d8d8d8" stroke-width="1"/><rect x="5" y="2.6" width="1.1" height="1.1" fill="#d8d8d8"/><rect x="5" y="4.6" width="1.1" height="4" fill="#d8d8d8"/></svg>
<svg class="a" style="left:822px;top:143px" width="12" height="11" viewBox="0 0 12 11"><path d="M1 0.5 L1 6 M3 0.5 L3 6" stroke="#bdbdbd" stroke-width="0.8" stroke-dasharray="1 0.6"/><circle cx="6.8" cy="2.6" r="1.8" fill="#e0e0e0"/><rect x="6.2" y="4" width="1.2" height="2.6" fill="#e0e0e0"/><rect x="3" y="6.6" width="8" height="2.4" fill="#e8e8e8"/><rect x="3" y="9.5" width="8" height="0.8" fill="#bdbdbd"/></svg>
<div class="a" style="left:839.5px;top:54px;width:140.5px;height:17px;background:#3f3f3f;"></div>
<div class="a" style="left:839.7px;top:54px;width:41.1px;height:17px;background:#4b4b4b;"></div>
<div class="a" style="left:880.8px;top:54px;width:39.7px;height:17px;background:#424242;"></div>
<div class="t" style="left:845.6px;top:60.00px;font-size:6.6px;color:#e8e8e8;font-weight:bold;letter-spacing:-0.24px">Histogram</div>
<div class="t" style="left:886.7px;top:60.00px;font-size:6.7px;color:#b5b5b5;font-weight:normal;">Navigator</div>
<svg class="a" style="left:969.8px;top:59.8px" width="7" height="5"><rect width="7" height="5" fill="#8a8a8a"/><path d="M0 1.7 L7 1.7 M0 3.4 L7 3.4 M1.8 0 L1.8 5 M3.5 0 L3.5 5 M5.2 0 L5.2 5" stroke="#5a5a5a" stroke-width="0.4"/></svg>
<div class="a" style="left:839.5px;top:71px;width:140.5px;height:55px;background:#4b4b4b;"></div>
<div class="a" style="left:843.4px;top:75.6px;width:114px;height:48.5px;background:#3f3f3f;"></div>
<div class="a" style="left:854.2px;top:89.6px;width:1.3px;height:34.5px;background:#c8c8c8;"></div>
<svg class="a" style="left:946.5px;top:80.3px" width="8.5" height="7.5" viewBox="0 0 8.5 7.5"><path d="M4.25 0.3 L8.2 7.2 L0.3 7.2 Z" fill="#e8e8e8"/><rect x="3.7" y="2.6" width="1.1" height="2.6" fill="#333"/><rect x="3.7" y="5.7" width="1.1" height="0.9" fill="#333"/></svg>
<div class="a" style="left:839.5px;top:126px;width:140.5px;height:1.7px;background:#3a3a3a;"></div>
<div class="a" style="left:839.5px;top:127.7px;width:140.5px;height:15.8px;background:#3f3f3f;"></div>
<div class="a" style="left:840px;top:127.9px;width:36.3px;height:15.6px;background:#4b4b4b;"></div>
<div class="a" style="left:876.3px;top:127.9px;width:46.9px;height:15.6px;background:#424242;"></div>
<div class="t" style="left:845.3px;top:134.00px;font-size:6.6px;color:#e8e8e8;font-weight:bold;letter-spacing:-0.17px">Libraries</div>
<div class="t" style="left:881.4px;top:134.00px;font-size:6.85px;color:#b5b5b5;font-weight:normal;">Adjustments</div>
<svg class="a" style="left:969.8px;top:133.5px" width="7" height="5"><rect width="7" height="5" fill="#8a8a8a"/><path d="M0 1.7 L7 1.7 M0 3.4 L7 3.4 M1.8 0 L1.8 5 M3.5 0 L3.5 5 M5.2 0 L5.2 5" stroke="#5a5a5a" stroke-width="0.4"/></svg>
<div class="a" style="left:839.5px;top:143.5px;width:140.5px;height:166.3px;background:#4b4b4b;"></div>
<div class="a" style="left:971px;top:179px;width:8.5px;height:132px;background:#4e4e4e;"></div>
<div class="a" style="left:979.3px;top:54px;width:0.7px;height:556px;background:#3a3a3a;"></div>
<div class="a" style="left:846px;top:150px;width:94px;height:8.7px;background:#404040;"></div>
<div class="t" style="left:851.3px;top:152.00px;font-size:6.45px;color:#dcdcdc;font-weight:normal;">NewBirdMe 2</div>
<svg class="a" style="left:934px;top:152.3px" width="5" height="3" viewBox="0 0 5 3"><path d="M0.5 0.5 L2.5 2.5 L4.5 0.5" fill="none" stroke="#a8a8a8" stroke-width="0.8"/></svg>
<div class="a" style="left:947px;top:149px;width:11.6px;height:11px;background:#333333;"></div>
<div class="a" style="left:949.3px;top:151.3px;width:3.2px;height:3.2px;background:#e0e0e0;"></div>
<div class="a" style="left:953px;top:151.3px;width:3.2px;height:3.2px;background:#e0e0e0;"></div>
<div class="a" style="left:949.3px;top:155px;width:3.2px;height:3.2px;background:#e0e0e0;"></div>
<div class="a" style="left:953px;top:155px;width:3.2px;height:3.2px;background:#e0e0e0;"></div>
<div class="a" style="left:963.5px;top:150.5px;width:8px;height:8px;background:repeating-linear-gradient(0deg,#d0d0d0 0 1.3px,#4b4b4b 1.3px 2.2px)"></div>
<div class="a" style="left:839.5px;top:163.5px;width:140.5px;height:12.5px;background:#484848;"></div>
<div class="a" style="left:846.8px;top:168.5px;width:4.2px;height:4.2px;border:1px solid #dcdcdc;border-radius:50%"></div>
<div class="a" style="left:845.3px;top:172.4px;width:1.2px;height:2.6px;background:#dcdcdc;transform:rotate(45deg)"></div>
<div class="t" style="left:853.3px;top:169.00px;font-size:6.5px;color:#626262;font-weight:normal;">Search Adobe Stock</div>
<svg class="a" style="left:968.5px;top:168.5px" width="6" height="4" viewBox="0 0 6 4"><path d="M0.5 0.5 L3 3 L5.5 0.5" fill="none" stroke="#8a8a8a" stroke-width="0.9"/></svg>
<div class="a" style="left:839.5px;top:178.3px;width:140.5px;height:0.8px;background:#424242;"></div>
<div class="a" style="left:846.8px;top:189.8px;width:5.2px;height:4.5px;background:#d8d8d8;clip-path:polygon(0 0,100% 0,50% 100%)"></div>
<div class="t" style="left:852.7px;top:188.00px;font-size:6.55px;color:#a9a9a9;font-weight:normal;">Graphics</div>
<div class="a" style="left:846.3px;top:197.6px;width:59px;height:45px;background:linear-gradient(90deg,#c9c9c9 0 12%,#f4f2f2 12% 88%,#c9c9c9 88%)"></div>
<svg class="a" style="left:846.3px;top:197.6px" width="59" height="45" viewBox="0 0 59 45"><path d="M10 4 C15 8 14 14 18 20 M14 2 L24 8 L30 3 M20 12 L24 22 M28 12 L24 22 L32 22 Z M10 26 C12 30 16 34 14 40 M44 28 L48 36 L42 38" fill="none" stroke="#dcc8c8" stroke-width="0.6"/></svg>
<div class="a" style="left:839.5px;top:311px;width:140.5px;height:13px;background:#545454;"></div>
<svg class="a" style="left:846px;top:313.5px" width="7" height="7" viewBox="0 0 7 7"><path d="M3.5 0 L3.5 7 M0 3.5 L7 3.5" stroke="#e0e0e0" stroke-width="1.4"/></svg>
<div class="a" style="left:853px;top:320.5px;width:1px;height:1px;background:#cfcfcf;"></div>
<svg class="a" style="left:861.5px;top:313px" width="8" height="9" viewBox="0 0 8 9"><path d="M4 0.5 L7 3.5 L5.2 3.5 L5.2 5.5 L2.8 5.5 L2.8 3.5 L1 3.5 Z" fill="#dcdcdc"/><rect x="0.8" y="6.5" width="6.4" height="1.6" fill="#bdbdbd"/></svg>
<svg class="a" style="left:950.5px;top:313px" width="11" height="9" viewBox="0 0 11 9"><path d="M2.5 7.8 C0.5 7.8 0.3 4.8 2.3 4.5 C2.3 2 5 0.8 6.8 2 C8.5 1.5 10.5 3 10 5 C11 6 10.5 7.8 9 7.8 Z" fill="none" stroke="#e0e0e0" stroke-width="1"/><path d="M4.3 5.5 C4.3 3.5 7.3 3.5 7.3 5.2 C7.3 6.5 5.5 6.8 4.5 6" fill="none" stroke="#e0e0e0" stroke-width="0.9"/></svg>
<svg class="a" style="left:966px;top:313px" width="7" height="9" viewBox="0 0 7 9"><path d="M0.3 1.5 L6.7 1.5 M2.3 1.5 L2.3 0.5 L4.7 0.5 L4.7 1.5 M1 2.5 L1.5 8.3 L5.5 8.3 L6 2.5 Z" fill="none" stroke="#707070" stroke-width="0.9"/></svg>
<div class="a" style="left:839.5px;top:324px;width:140.5px;height:2px;background:#3a3a3a;"></div>
<div class="a" style="left:839.5px;top:326px;width:140.5px;height:17px;background:#3f3f3f;"></div>
<div class="a" style="left:840px;top:326px;width:30.5px;height:17px;background:#4b4b4b;"></div>
<div class="a" style="left:870.5px;top:326px;width:36.5px;height:17px;background:#424242;"></div>
<div class="a" style="left:907px;top:326px;width:28.6px;height:17px;background:#424242;"></div>
<div class="t" style="left:845.3px;top:332.00px;font-size:6.4px;color:#e8e8e8;font-weight:bold;letter-spacing:-0.25px">Layers</div>
<div class="t" style="left:874.9px;top:332.00px;font-size:6.4px;color:#b5b5b5;font-weight:normal;">Channels</div>
<div class="t" style="left:912.7px;top:332.00px;font-size:6.45px;color:#b5b5b5;font-weight:normal;">Paths</div>
<svg class="a" style="left:969.8px;top:332px" width="7" height="5"><rect width="7" height="5" fill="#8a8a8a"/><path d="M0 1.7 L7 1.7 M0 3.4 L7 3.4 M1.8 0 L1.8 5 M3.5 0 L3.5 5 M5.2 0 L5.2 5" stroke="#5a5a5a" stroke-width="0.4"/></svg>
<div class="a" style="left:839.5px;top:343px;width:140.5px;height:266.6px;background:#4b4b4b;"></div>
<div class="a" style="left:971px;top:408px;width:8.5px;height:186px;background:#4e4e4e;"></div>
<div class="a" style="left:843px;top:348px;width:50.5px;height:9.4px;background:#3d3d3d;"></div>
<div class="a" style="left:848px;top:349.8px;width:4px;height:4px;border:0.9px solid #dcdcdc;border-radius:50%"></div>
<div class="a" style="left:846.8px;top:353.3px;width:0.9px;height:2.2px;background:#dcdcdc;transform:rotate(45deg)"></div>
<div class="t" style="left:854.5px;top:350.00px;font-size:6.15px;color:#dcdcdc;font-weight:normal;">Kind</div>
<svg class="a" style="left:888px;top:351.3px" width="5" height="3" viewBox="0 0 5 3"><path d="M0.5 0.5 L2.5 2.5 L4.5 0.5" fill="none" stroke="#bdbdbd" stroke-width="0.8"/></svg>
<svg class="a" style="left:900.5px;top:348.5px" width="9" height="8" viewBox="0 0 9 8"><rect x="0.6" y="0.9" width="7.6" height="6.2" fill="none" stroke="#cfcfcf" stroke-width="1"/><path d="M1.5 6.3 L3 4 L4.3 5.3 L5.5 3.8 L7.3 6.3 Z" fill="#dcdcdc"/></svg>
<svg class="a" style="left:914.5px;top:348.5px" width="8" height="8" viewBox="0 0 8 8"><circle cx="4" cy="4" r="3.3" fill="none" stroke="#d4d4d4" stroke-width="1"/><path d="M1.7 6.3 L6.3 1.7 A3.3 3.3 0 0 0 1.7 6.3 Z" fill="#4b4b4b"/><path d="M1.7 6.3 L6.3 1.7 A3.3 3.3 0 0 1 1.7 6.3 Z" fill="#d8d8d8"/></svg>
<svg class="a" style="left:929px;top:348.5px" width="7" height="8" viewBox="0 0 7 8"><path d="M0.7 0.8 L6.3 0.8 M3.5 0.8 L3.5 7.2 M2 7.2 L5 7.2 M0.7 0.8 L0.7 2.3 M6.3 0.8 L6.3 2.3" fill="none" stroke="#d8d8d8" stroke-width="1.1"/></svg>
<svg class="a" style="left:942px;top:348.5px" width="8" height="8" viewBox="0 0 8 8"><rect x="1.3" y="1.3" width="5.4" height="5.4" fill="none" stroke="#cfcfcf" stroke-width="0.9"/><rect x="0" y="0" width="2.4" height="2.4" fill="#d8d8d8"/><rect x="5.6" y="0" width="2.4" height="2.4" fill="#d8d8d8"/><rect x="0" y="5.6" width="2.4" height="2.4" fill="#d8d8d8"/><rect x="5.6" y="5.6" width="2.4" height="2.4" fill="#d8d8d8"/></svg>
<svg class="a" style="left:956px;top:348.3px" width="8" height="9" viewBox="0 0 8 9"><path d="M1.5 0.5 L5 0.5 L7.5 3 L7.5 8.5 L1.5 8.5 Z" fill="#d4d4d4"/><rect x="0.3" y="4.8" width="3.6" height="3.6" fill="#4b4b4b"/><rect x="0.8" y="5.6" width="2.6" height="2.6" fill="#d4d4d4"/></svg>
<div class="a" style="left:972.5px;top:346.8px;width:5px;height:5px;border-radius:50%;background:#e8e8e8"></div>
<div class="a" style="left:973.3px;top:351.5px;width:3.4px;height:5px;background:#3a3a3a;border-radius:1.5px"></div>
<div class="a" style="left:843px;top:364px;width:75.8px;height:9.5px;background:#3d3d3d;"></div>
<div class="t" style="left:846.5px;top:366.00px;font-size:6.3px;color:#dcdcdc;font-weight:normal;">Normal</div>
<svg class="a" style="left:912.5px;top:367.3px" width="5" height="3" viewBox="0 0 5 3"><path d="M0.5 0.5 L2.5 2.5 L4.5 0.5" fill="none" stroke="#bdbdbd" stroke-width="0.8"/></svg>
<div class="t" style="left:921.9px;top:366.00px;font-size:6.15px;color:#c4c4c4;font-weight:normal;">Opacity:</div>
<div class="a" style="left:947.7px;top:364px;width:17.5px;height:9.5px;background:#3d3d3d;"></div>
<div class="t" style="left:949.1px;top:367.00px;font-size:5.8px;color:#dcdcdc;font-weight:normal;">100%</div>
<div class="a" style="left:968.7px;top:364px;width:9.7px;height:9.5px;background:#3d3d3d;"></div>
<svg class="a" style="left:971.3px;top:367.3px" width="5" height="3" viewBox="0 0 5 3"><path d="M0.5 0.5 L2.5 2.5 L4.5 0.5" fill="none" stroke="#bdbdbd" stroke-width="0.8"/></svg>
<div class="a" style="left:839.5px;top:376.5px;width:140.5px;height:0.8px;background:#444;"></div>
<div class="t" style="left:843px;top:382.00px;font-size:6.26px;color:#c4c4c4;font-weight:normal;">Unify:</div>
<svg class="a" style="left:861px;top:379.5px" width="10" height="11" viewBox="0 0 10 11"><path d="M1 9 L4 5.5" stroke="#d4d4d4" stroke-width="1.1"/><path d="M3 3 L6 0.8 L8.5 3.5 L6.5 6.5 Z" fill="#d4d4d4"/></svg>
<svg class="a" style="left:866px;top:387.5px" width="6" height="3" viewBox="0 0 6 3"><circle cx="1.5" cy="1.5" r="1.1" fill="none" stroke="#cfcfcf" stroke-width="0.7"/><circle cx="4.3" cy="1.5" r="1.1" fill="none" stroke="#cfcfcf" stroke-width="0.7"/></svg>
<svg class="a" style="left:874px;top:380px" width="10" height="8" viewBox="0 0 10 8"><ellipse cx="4.5" cy="3.5" rx="3.8" ry="2.6" fill="none" stroke="#d4d4d4" stroke-width="1"/><circle cx="4.5" cy="3.5" r="1.2" fill="#d4d4d4"/></svg>
<svg class="a" style="left:879px;top:387.5px" width="6" height="3" viewBox="0 0 6 3"><circle cx="1.5" cy="1.5" r="1.1" fill="none" stroke="#cfcfcf" stroke-width="0.7"/><circle cx="4.3" cy="1.5" r="1.1" fill="none" stroke="#cfcfcf" stroke-width="0.7"/></svg>
<div class="t" style="left:887px;top:382.00px;font-size:7.5px;color:#d0d0d0;font-weight:normal;font-family:"Liberation Serif",serif"><i>fx</i></div>
<svg class="a" style="left:892px;top:387.5px" width="6" height="3" viewBox="0 0 6 3"><circle cx="1.5" cy="1.5" r="1.1" fill="none" stroke="#cfcfcf" stroke-width="0.7"/><circle cx="4.3" cy="1.5" r="1.1" fill="none" stroke="#cfcfcf" stroke-width="0.7"/></svg>
<div class="a" style="left:915px;top:381.5px;width:6px;height:6px;background:#e6e6e6;border-radius:1px"></div>
<svg class="a" style="left:915.8px;top:382.3px" width="4.5" height="4.5" viewBox="0 0 4.5 4.5"><path d="M0.6 2.2 L1.8 3.6 L4 0.8" fill="none" stroke="#333" stroke-width="0.9"/></svg>
<div class="t" style="left:923.4px;top:382.00px;font-size:6.05px;color:#e0e0e0;font-weight:normal;">Propagate Frame 1</div>
<div class="a" style="left:839.5px;top:392.5px;width:140.5px;height:0.8px;background:#444;"></div>
<div class="t" style="left:843px;top:398.00px;font-size:6.1px;color:#c4c4c4;font-weight:normal;">Lock:</div>
<div class="a" style="left:862px;top:397px;width:7px;height:7px;border:0.8px solid #cfcfcf;background-color:#4b4b4b;background-image:linear-gradient(45deg,#cfcfcf 25%,transparent 25%,transparent 75%,#cfcfcf 75%),linear-gradient(45deg,#cfcfcf 25%,transparent 25%,transparent 75%,#cfcfcf 75%);background-size:3px 3px;background-position:0 0,1.5px 1.5px"></div>
<svg class="a" style="left:875px;top:396px" width="8" height="9" viewBox="0 0 8 9"><path d="M3 5.8 L7.3 0.8" stroke="#d8d8d8" stroke-width="1" stroke-linecap="round"/><path d="M0.6 8.6 C0.8 6.6 1.8 5.4 3.4 5.4 C3.9 6.1 3.6 7.6 0.6 8.6 Z" fill="#e0e0e0"/></svg>
<svg class="a" style="left:887px;top:396.5px" width="8" height="8" viewBox="0 0 8 8"><path d="M4 0.5 L4 7.5 M0.5 4 L7.5 4" stroke="#d4d4d4" stroke-width="1"/><path d="M4 0 L5.3 1.5 L2.7 1.5 Z M4 8 L5.3 6.5 L2.7 6.5 Z M0 4 L1.5 2.7 L1.5 5.3 Z M8 4 L6.5 2.7 L6.5 5.3 Z" fill="#d4d4d4"/></svg>
<svg class="a" style="left:900px;top:396.5px" width="8" height="8" viewBox="0 0 8 8"><path d="M1 1.5 L5 1.5 L5 0.5 M1 1.5 L1 7 L7 7 L7 3.5" fill="none" stroke="#c8c8c8" stroke-width="0.9"/><path d="M4 4 L7.5 0.5" stroke="#c8c8c8" stroke-width="0.8"/></svg>
<svg class="a" style="left:913px;top:396.5px" width="8" height="8.5" viewBox="0 0 8 8.5"><path d="M2.2 4 L2.2 2.7 A1.8 1.8 0 0 1 5.8 2.7 L5.8 4" fill="none" stroke="#dcdcdc" stroke-width="1"/><rect x="0.8" y="3.8" width="6.4" height="4.5" rx="0.6" fill="#dcdcdc"/><rect x="3.5" y="5.3" width="1" height="1.6" fill="#4b4b4b"/></svg>
<div class="t" style="left:935.7px;top:399.00px;font-size:5.9px;color:#8e8e8e;font-weight:normal;">Fill:</div>
<div class="a" style="left:947.7px;top:395.8px;width:17.5px;height:9.5px;background:#3d3d3d;"></div>
<div class="t" style="left:949.1px;top:399.00px;font-size:5.8px;color:#dcdcdc;font-weight:normal;">100%</div>
<div class="a" style="left:968.7px;top:395.8px;width:9.7px;height:9.5px;background:#3d3d3d;"></div>
<svg class="a" style="left:971.3px;top:399.3px" width="5" height="3" viewBox="0 0 5 3"><path d="M0.5 0.5 L2.5 2.5 L4.5 0.5" fill="none" stroke="#bdbdbd" stroke-width="0.8"/></svg>
<div class="a" style="left:840px;top:408.3px;width:17.5px;height:13px;background:#bf7418;"></div>
<div class="a" style="left:857.5px;top:408.3px;width:113.3px;height:13px;background:#4f4f4f;"></div>
<div class="a" style="left:840px;top:421.3px;width:17.5px;height:0.8px;background:#a86818;"></div>
<div class="a" style="left:840px;top:422px;width:17.5px;height:23px;background:#bf7418;"></div>
<div class="a" style="left:857.5px;top:422px;width:113.3px;height:23px;background:#6a6a6a;"></div>
<div class="a" style="left:839.5px;top:445px;width:140.5px;height:0.8px;background:#3e3e3e;"></div>
<svg class="a" style="left:844.5px;top:411.8px" width="9" height="6" viewBox="0 0 9 6"><path d="M0.5 3 C2.5 0.3 6.5 0.3 8.5 3 C6.5 5.7 2.5 5.7 0.5 3 Z" fill="none" stroke="#f4e4c8" stroke-width="1"/><circle cx="4.5" cy="3" r="1.3" fill="#f4e4c8"/></svg>
<svg class="a" style="left:844.5px;top:430.5px" width="9" height="6" viewBox="0 0 9 6"><path d="M0.5 3 C2.5 0.3 6.5 0.3 8.5 3 C6.5 5.7 2.5 5.7 0.5 3 Z" fill="none" stroke="#f4e4c8" stroke-width="1"/><circle cx="4.5" cy="3" r="1.3" fill="#f4e4c8"/></svg>
<svg class="a" style="left:859.5px;top:411.5px" width="3" height="6" viewBox="0 0 3 6"><path d="M0.5 0.5 L2.5 3 L0.5 5.5" fill="none" stroke="#bdbdbd" stroke-width="0.8"/></svg>
<div class="a" style="left:866.8px;top:412px;width:8.8px;height:6.5px;background:#d8d8d8;border-radius:0.5px"></div>
<div class="a" style="left:866.8px;top:411px;width:4px;height:1.5px;background:#d8d8d8;"></div>
<div class="t" style="left:881.3px;top:413.00px;font-size:6.25px;color:#e0e0e0;font-weight:normal;">Cyanotype</div>
<div class="a" style="left:858.3px;top:422.6px;width:18.5px;height:22px;background:#cfcfcf;"></div>
<div class="a" style="left:859.3px;top:423.6px;width:16.5px;height:20px;background:#f4f4f4;"></div>
<svg class="a" style="left:861px;top:425.3px" width="13" height="16.6"><defs><pattern id="chk2" width="2" height="2" patternUnits="userSpaceOnUse"><rect width="1" height="1" fill="#d4d4d4"/><rect x="1" y="1" width="1" height="1" fill="#d4d4d4"/></pattern></defs><rect width="13" height="16.6" fill="#f6f6f6"/><rect width="13" height="16.6" fill="url(#chk2)"/></svg>
<div class="t" style="left:879.8px;top:432.00px;font-size:6.13px;color:#e6e6e6;font-weight:normal;">Paste Neg Here</div>
<div class="a" style="left:839.5px;top:595px;width:140.5px;height:14.6px;background:#4e4e4e;"></div>
<div class="a" style="left:839.5px;top:594.5px;width:140.5px;height:0.8px;background:#454545;"></div>
<svg class="a" style="left:860px;top:598px" width="10" height="6" viewBox="0 0 10 6"><circle cx="2.6" cy="3" r="2" fill="none" stroke="#8a8a8a" stroke-width="0.9"/><circle cx="6.8" cy="3" r="2" fill="none" stroke="#8a8a8a" stroke-width="0.9"/></svg>
<div class="t" style="left:877px;top:599.00px;font-size:8.5px;color:#c8c8c8;font-weight:normal;font-family:"Liberation Serif",serif"><i>fx</i></div>
<div class="a" style="left:885.5px;top:607.3px;width:1px;height:1px;background:#dcdcdc;"></div>
<div class="a" style="left:893px;top:598.3px;width:7.5px;height:6px;background:#e0e0e0;border-radius:0.5px"></div>
<div class="a" style="left:894.9px;top:599.4px;width:3.7px;height:3.7px;border-radius:50%;background:#4e4e4e"></div>
<svg class="a" style="left:908.5px;top:597.5px" width="8" height="8" viewBox="0 0 8 8"><circle cx="4" cy="4" r="3.3" fill="none" stroke="#dcdcdc" stroke-width="1.1"/><path d="M1.7 6.3 L6.3 1.7 A3.3 3.3 0 0 0 1.7 6.3 Z" fill="#dcdcdc"/></svg>
<div class="a" style="left:917.5px;top:607.3px;width:1px;height:1px;background:#dcdcdc;"></div>
<svg class="a" style="left:924px;top:597.5px" width="9" height="8" viewBox="0 0 9 8"><path d="M0.5 1 L3.5 1 L4.3 2 L8.5 2 L8.5 7.5 L0.5 7.5 Z" fill="#dcdcdc"/></svg>
<svg class="a" style="left:940.5px;top:597.5px" width="8" height="9" viewBox="0 0 8 9"><path d="M0.6 2.5 L5.5 2.5 L5.5 8 M2.5 0.6 L7.4 0.6 L7.4 6" fill="none" stroke="#dcdcdc" stroke-width="1"/><rect x="1" y="3" width="4" height="4.5" fill="#dcdcdc"/></svg>
<svg class="a" style="left:955.5px;top:597px" width="7" height="9" viewBox="0 0 7 9"><path d="M0.3 1.5 L6.7 1.5 M2.3 1.5 L2.3 0.5 L4.7 0.5 L4.7 1.5 M1 2.5 L1.5 8.3 L5.5 8.3 L6 2.5 Z" fill="none" stroke="#8a8a8a" stroke-width="0.9"/></svg>
<div class="a" style="left:0;top:609.5px;width:980px;height:3.5px;background:linear-gradient(90deg,#100c0c 0px,#140e0e 200px,#120c0e 490px,#10121a 540px,#1c2436 600px,#161a26 650px,#222a3e 700px,#2a2020 735px,#7a3418 750px,#8a4020 790px,#6a2a16 835px,#2a2a36 850px,#6e3218 870px,#8a4222 900px,#5a2a18 930px,#1e2436 945px,#222a40 980px)"></div>
</body></html>
